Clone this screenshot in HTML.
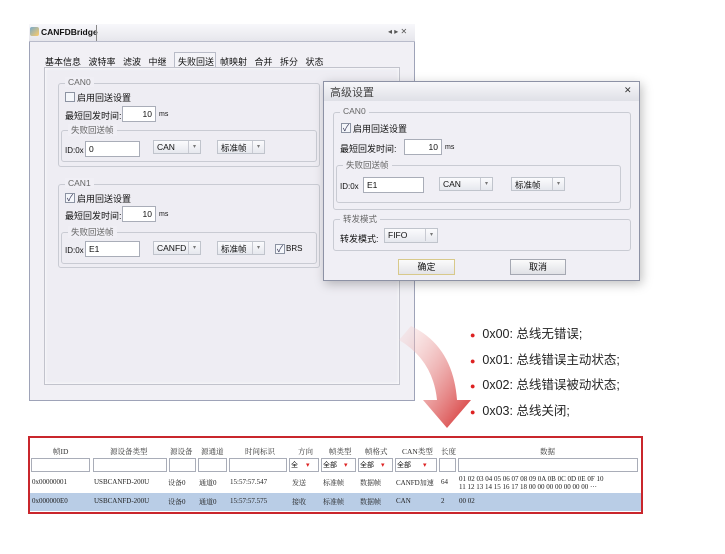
<!DOCTYPE html>
<html><head><meta charset="utf-8"><style>
*{margin:0;padding:0;box-sizing:border-box}
body{width:725px;height:554px;background:#fff;position:relative;overflow:hidden;font-family:"Liberation Sans","Noto Sans CJK SC",sans-serif;font-size:9px;color:#111}
.a{position:absolute}
.inp{position:absolute;background:#fff;border:1px solid #a9adb8;height:16px;font-size:8.5px;padding:2px 3px}
.cb{position:absolute;width:10px;height:10px;border:1px solid #8c93a2;background:#f4f6fa;font-size:9px;line-height:8px;text-align:center;color:#335}
.gb{position:absolute;border:1px solid #c9cbd3;border-radius:3px}
.gl{position:absolute;top:-7px;left:6px;background:#f0eff5;padding:0 3px;color:#666;font-size:8.5px}
.sel{position:absolute;height:14px;border:1px solid #c0c4cc;background:linear-gradient(#fbfbfd,#e6e8ee);font-size:8.5px;padding:1px 3px}
.sel i{position:absolute;right:0;top:0;width:12px;height:12px;border-left:1px solid #c8cad2;font-style:normal;text-align:center;font-size:6px;color:#777;line-height:12px}
</style></head><body>
<div class="a" style="left:29px;top:24px;width:386px;height:377px;background:#f1f0f5;border:1px solid #9ea3b8"></div>
<div class="a" style="left:29px;top:24px;width:386px;height:18px;background:linear-gradient(#f8f8fb,#e6e6ec);border-bottom:1px solid #b9bccb"></div>
<div class="a" style="left:30px;top:27px;width:9px;height:9px;background:linear-gradient(135deg,#7ac,#fc6);border-radius:2px"></div>
<div class="a" style="left:41px;top:27px;font-weight:bold;font-size:8.5px">CANFDBridge</div>
<div class="a" style="left:96px;top:25px;width:1px;height:16px;background:#888"></div>
<div class="a" style="left:388px;top:27px;font-size:8px;color:#555">◂ ▸ ✕</div>
<div class="a" style="left:45px;top:55px;font-size:9px;word-spacing:5px">基本信息 波特率 滤波 中继</div>
<div class="a" style="left:174px;top:52px;width:42px;height:16px;border:1px solid #b9bcc8;border-bottom:none;background:#f4f4f8"></div>
<div class="a" style="left:178px;top:55px;font-size:9px">失败回送</div>
<div class="a" style="left:220px;top:55px;font-size:9px;word-spacing:5px">帧映射 合并 拆分 状态</div>
<div class="a" style="left:44px;top:67px;width:356px;height:318px;border:1px solid #c2c3cc;background:#eeedf3;box-shadow:inset 0 0 3px #fff"></div>
<div class="gb" style="left:58px;top:83px;width:262px;height:84px"><span class="gl">CAN0</span></div>
<div class="cb" style="left:65px;top:92px"></div><div class="a" style="left:77px;top:91px">启用回送设置</div>
<div class="a" style="left:65px;top:109px">最短回发时间:</div>
<div class="inp" style="left:122px;top:106px;width:34px;text-align:right">10</div><div class="a" style="left:159px;top:111px;font-size:7px">ms</div>
<div class="gb" style="left:61px;top:130px;width:256px;height:32px"><span class="gl">失败回送帧</span></div>
<div class="a" style="left:65px;top:146px;font-size:8px">ID:0x</div>
<div class="inp" style="left:85px;top:141px;width:55px">0</div>
<div class="sel" style="left:153px;top:140px;width:48px">CAN<i>▾</i></div>
<div class="sel" style="left:217px;top:140px;width:48px">标准帧<i>▾</i></div>
<div class="gb" style="left:58px;top:184px;width:262px;height:84px"><span class="gl">CAN1</span></div>
<div class="cb" style="left:65px;top:193px">✓</div><div class="a" style="left:77px;top:192px">启用回送设置</div>
<div class="a" style="left:65px;top:209px">最短回发时间:</div>
<div class="inp" style="left:122px;top:206px;width:34px;text-align:right">10</div><div class="a" style="left:159px;top:211px;font-size:7px">ms</div>
<div class="gb" style="left:61px;top:232px;width:256px;height:32px"><span class="gl">失败回送帧</span></div>
<div class="a" style="left:65px;top:246px;font-size:8px">ID:0x</div>
<div class="inp" style="left:85px;top:241px;width:55px">E1</div>
<div class="sel" style="left:153px;top:241px;width:48px">CANFD<i>▾</i></div>
<div class="sel" style="left:217px;top:241px;width:48px">标准帧<i>▾</i></div>
<div class="cb" style="left:275px;top:244px">✓</div><div class="a" style="left:286px;top:244px;font-size:8px">BRS</div>
<div class="a" style="left:323px;top:81px;width:317px;height:200px;background:#f0eff5;border:1px solid #8d92a5;box-shadow:2px 3px 10px rgba(0,0,0,.25)"></div>
<div class="a" style="left:324px;top:82px;width:315px;height:19px;background:linear-gradient(#f7f7fa,#dfe0e7)"></div>
<div class="a" style="left:330px;top:84px;font-size:11px;color:#444">高级设置</div>
<div class="a" style="left:624px;top:85px;font-size:9px;color:#333">✕</div>
<div class="gb" style="left:333px;top:112px;width:298px;height:98px"><span class="gl">CAN0</span></div>
<div class="cb" style="left:341px;top:123px">✓</div><div class="a" style="left:353px;top:122px">启用回送设置</div>
<div class="a" style="left:340px;top:142px">最短回发时间:</div>
<div class="inp" style="left:404px;top:139px;width:38px;text-align:right">10</div><div class="a" style="left:445px;top:144px;font-size:7px">ms</div>
<div class="gb" style="left:336px;top:165px;width:285px;height:38px"><span class="gl">失败回送帧</span></div>
<div class="a" style="left:340px;top:182px;font-size:8px">ID:0x</div>
<div class="inp" style="left:363px;top:177px;width:61px">E1</div>
<div class="sel" style="left:439px;top:177px;width:54px">CAN<i>▾</i></div>
<div class="sel" style="left:511px;top:177px;width:54px">标准帧<i>▾</i></div>
<div class="gb" style="left:333px;top:219px;width:298px;height:32px"><span class="gl">转发模式</span></div>
<div class="a" style="left:340px;top:232px">转发模式:</div>
<div class="sel" style="left:384px;top:228px;width:54px;height:15px">FIFO<i>▾</i></div>
<div class="a" style="left:398px;top:259px;width:57px;height:16px;border:1px solid #d8c98a;background:linear-gradient(#fbfbfb,#e4e4e8);text-align:center;line-height:14px">确定</div>
<div class="a" style="left:510px;top:259px;width:56px;height:16px;border:1px solid #a5a8b2;background:linear-gradient(#fbfbfb,#e0e1e6);text-align:center;line-height:14px">取消</div>
<svg class="a" style="left:395px;top:318px" width="85" height="112"><defs><linearGradient id="g" x1="0" y1="0" x2="1" y2="1"><stop offset="0" stop-color="#f6dede" stop-opacity=".3"/><stop offset="1" stop-color="#d42a2a"/></linearGradient></defs><path d="M16 8 Q58 28 62 82 L76 82 L52 110 L28 82 L42 82 Q38 42 4 22 Z" fill="url(#g)"/></svg>
<div class="a" style="left:470px;top:322px;font-size:12.5px;line-height:24.5px;color:#222">
<div><span style="color:#d22;font-size:9px">●</span>&nbsp;&nbsp;0x00: 总线无错误;</div>
<div><span style="color:#d22;font-size:9px">●</span>&nbsp;&nbsp;0x01: 总线错误主动状态;</div>
<div><span style="color:#d22;font-size:9px">●</span>&nbsp;&nbsp;0x02: 总线错误被动状态;</div>
<div><span style="color:#d22;font-size:9px">●</span>&nbsp;&nbsp;0x03: 总线关闭;</div></div>
<div class="a" style="left:28px;top:436px;width:615px;height:78px;border:2px solid #c9262c;background:#fff"></div>
<div class="a" style="left:30px;top:493px;width:611px;height:18px;background:#b9cde6"></div>
<div class="a" style="top:446px;left:0;width:725px;font-size:7.5px;color:#333;font-family:'Liberation Serif','Noto Serif CJK SC',serif">
<span class="a" style="left:53px">帧ID</span><span class="a" style="left:110px">源设备类型</span><span class="a" style="left:170px">源设备</span><span class="a" style="left:201px">源通道</span><span class="a" style="left:245px">时间标识</span><span class="a" style="left:298px">方向</span><span class="a" style="left:329px">帧类型</span><span class="a" style="left:365px">帧格式</span><span class="a" style="left:402px">CAN类型</span><span class="a" style="left:441px">长度</span><span class="a" style="left:540px">数据</span></div>
<div class="inp" style="left:31px;top:458px;width:59px;height:14px"></div>
<div class="inp" style="left:93px;top:458px;width:74px;height:14px"></div>
<div class="inp" style="left:169px;top:458px;width:27px;height:14px"></div>
<div class="inp" style="left:198px;top:458px;width:29px;height:14px"></div>
<div class="inp" style="left:229px;top:458px;width:58px;height:14px"></div>
<div class="inp" style="left:289px;top:458px;width:30px;height:14px;font-size:7px;padding:1px">全 <span style="color:#d22;margin-left:6px">▾</span></div>
<div class="inp" style="left:321px;top:458px;width:35px;height:14px;font-size:7px;padding:1px">全部 <span style="color:#d22;margin-left:5px">▾</span></div>
<div class="inp" style="left:358px;top:458px;width:35px;height:14px;font-size:7px;padding:1px">全部 <span style="color:#d22;margin-left:5px">▾</span></div>
<div class="inp" style="left:395px;top:458px;width:42px;height:14px;font-size:7px;padding:1px">全部 <span style="color:#d22;margin-left:10px">▾</span></div>
<div class="inp" style="left:439px;top:458px;width:17px;height:14px"></div>
<div class="inp" style="left:458px;top:458px;width:180px;height:14px"></div>
<div class="a" style="top:478px;left:0;width:725px;font-size:7px;color:#222;font-family:'Liberation Serif','Noto Serif CJK SC',serif">
<span class="a" style="left:32px">0x00000001</span><span class="a" style="left:94px">USBCANFD-200U</span><span class="a" style="left:168px">设备0</span><span class="a" style="left:199px">通道0</span><span class="a" style="left:230px">15:57:57.547</span><span class="a" style="left:292px">发送</span><span class="a" style="left:323px">标准帧</span><span class="a" style="left:360px">数据帧</span><span class="a" style="left:396px">CANFD加速</span><span class="a" style="left:441px">64</span><span class="a" style="left:459px;top:-3px;line-height:8px;white-space:pre">01 02 03 04 05 06 07 08 09 0A 0B 0C 0D 0E 0F 10
11 12 13 14 15 16 17 18 00 00 00 00 00 00 00 ···</span></div>
<div class="a" style="top:497px;left:0;width:725px;font-size:7px;color:#222;font-family:'Liberation Serif','Noto Serif CJK SC',serif">
<span class="a" style="left:32px">0x000000E0</span><span class="a" style="left:94px">USBCANFD-200U</span><span class="a" style="left:168px">设备0</span><span class="a" style="left:199px">通道0</span><span class="a" style="left:230px">15:57:57.575</span><span class="a" style="left:292px">接收</span><span class="a" style="left:323px">标准帧</span><span class="a" style="left:360px">数据帧</span><span class="a" style="left:396px">CAN</span><span class="a" style="left:441px">2</span><span class="a" style="left:459px">00 02</span></div>
</body></html>
